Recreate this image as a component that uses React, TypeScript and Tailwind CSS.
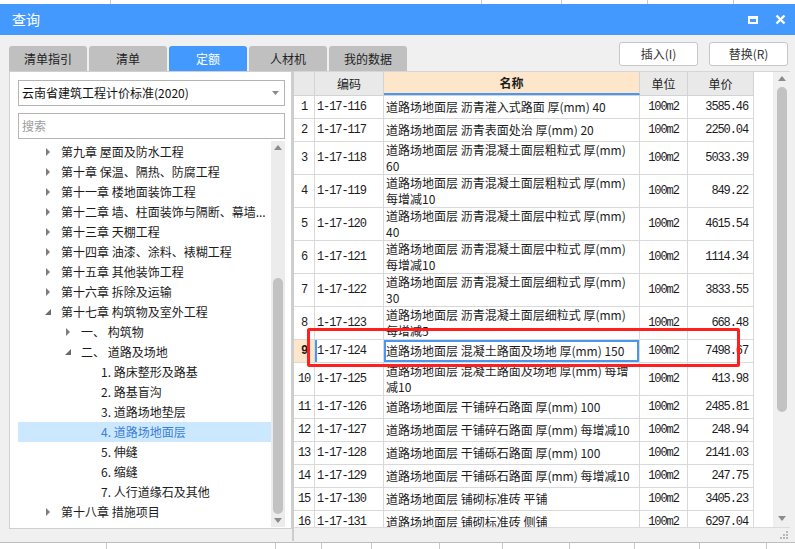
import React from "react";

type Row = { no: number; code: string; name: string[]; unit: string; price: string };

const rows: Row[] = [
  { no: 1, code: "1-17-116", name: ["道路场地面层 沥青灌入式路面 厚(mm) 40"], unit: "100m2", price: "3585.46" },
  { no: 2, code: "1-17-117", name: ["道路场地面层 沥青表面处治 厚(mm) 20"], unit: "100m2", price: "2250.04" },
  { no: 3, code: "1-17-118", name: ["道路场地面层 沥青混凝土面层粗粒式 厚(mm)", "60"], unit: "100m2", price: "5033.39" },
  { no: 4, code: "1-17-119", name: ["道路场地面层 沥青混凝土面层粗粒式 厚(mm)", "每增减10"], unit: "100m2", price: "849.22" },
  { no: 5, code: "1-17-120", name: ["道路场地面层 沥青混凝土面层中粒式 厚(mm)", "40"], unit: "100m2", price: "4615.54" },
  { no: 6, code: "1-17-121", name: ["道路场地面层 沥青混凝土面层中粒式 厚(mm)", "每增减10"], unit: "100m2", price: "1114.34" },
  { no: 7, code: "1-17-122", name: ["道路场地面层 沥青混凝土面层细粒式 厚(mm)", "30"], unit: "100m2", price: "3833.55" },
  { no: 8, code: "1-17-123", name: ["道路场地面层 沥青混凝土面层细粒式 厚(mm)", "每增减5"], unit: "100m2", price: "668.48" },
  { no: 9, code: "1-17-124", name: ["道路场地面层 混凝土路面及场地 厚(mm) 150"], unit: "100m2", price: "7498.67" },
  { no: 10, code: "1-17-125", name: ["道路场地面层 混凝土路面及场地 厚(mm) 每增", "减10"], unit: "100m2", price: "413.98" },
  { no: 11, code: "1-17-126", name: ["道路场地面层 干铺碎石路面 厚(mm) 100"], unit: "100m2", price: "2485.81" },
  { no: 12, code: "1-17-127", name: ["道路场地面层 干铺碎石路面 厚(mm) 每增减10"], unit: "100m2", price: "248.94" },
  { no: 13, code: "1-17-128", name: ["道路场地面层 干铺砾石路面 厚(mm) 100"], unit: "100m2", price: "2141.03" },
  { no: 14, code: "1-17-129", name: ["道路场地面层 干铺砾石路面 厚(mm) 每增减10"], unit: "100m2", price: "247.75" },
  { no: 15, code: "1-17-130", name: ["道路场地面层 铺砌标准砖 平铺"], unit: "100m2", price: "3405.23" },
  { no: 16, code: "1-17-131", name: ["道路场地面层 铺砌标准砖 侧铺"], unit: "100m2", price: "6297.04" },
];

type Node = { level: 0 | 1 | 2; label: string; open?: boolean; selected?: boolean };

const tree: Node[] = [
  { level: 0, label: "第九章 屋面及防水工程" },
  { level: 0, label: "第十章 保温、隔热、防腐工程" },
  { level: 0, label: "第十一章 楼地面装饰工程" },
  { level: 0, label: "第十二章 墙、柱面装饰与隔断、幕墙..." },
  { level: 0, label: "第十三章 天棚工程" },
  { level: 0, label: "第十四章 油漆、涂料、裱糊工程" },
  { level: 0, label: "第十五章 其他装饰工程" },
  { level: 0, label: "第十六章 拆除及运输" },
  { level: 0, label: "第十七章 构筑物及室外工程", open: true },
  { level: 1, label: "一、 构筑物" },
  { level: 1, label: "二、 道路及场地", open: true },
  { level: 2, label: "1. 路床整形及路基" },
  { level: 2, label: "2. 路基盲沟" },
  { level: 2, label: "3. 道路场地垫层" },
  { level: 2, label: "4. 道路场地面层", selected: true },
  { level: 2, label: "5. 伸缝" },
  { level: 2, label: "6. 缩缝" },
  { level: 2, label: "7. 人行道缘石及其他" },
  { level: 0, label: "第十八章 措施项目" },
];

const indent = { 0: "pl-[27px]", 1: "pl-[47px]", 2: "pl-[83px]" };

const Arrow: React.FC<{ open?: boolean }> = ({ open }) =>
  open ? (
    <svg width="16" height="8" viewBox="0 0 16 8">
      <polygon points="6,1 6,7 0,7" fill="#6b6b6b" />
    </svg>
  ) : (
    <svg width="16" height="8" viewBox="0 0 16 8">
      <polygon points="1,0 5,4 1,8" fill="#7d7d7d" />
    </svg>
  );

const tabs = ["清单指引", "清单", "定额", "人材机", "我的数据"];

const mono = "font-['Liberation_Mono','Noto_Sans_CJK_SC',monospace] text-[12px] tracking-[-1.1px]";

const App: React.FC = () => {
  return (
    <div className="w-[795px] h-[549px] overflow-hidden bg-white flex flex-col relative font-['Noto_Sans_CJK_SC','Noto_Sans',sans-serif] text-[#1c1c1c]">
      {/* sheet behind the dialog, top strip */}
      <div className="h-[4px] flex bg-white">
        <div className="w-[111px] border-r border-[#c8c8c8]" />
        <div className="w-[371px] border-r border-[#c8c8c8]" />
        <div className="w-[80px] border-r border-[#c8c8c8]" />
        <div className="w-[86px] border-r border-[#c8c8c8]" />
        <div className="w-[86px] border-r border-[#c8c8c8]" />
      </div>

      {/* dialog */}
      <div className="h-[538px] flex flex-col">
        <div className="h-[31px] bg-[#4499ff] flex items-center pl-[12px] pr-[6px] text-white">
          <span className="text-[14px]">查询</span>
          <div className="ml-auto flex items-center gap-[17px] pr-[3px]">
            <div className="w-[10px] h-[8px] border-2 border-t-[3px] border-white" />
            <svg width="11" height="11" viewBox="0 0 11 11">
              <path d="M1.5 1.5 L9.5 9.5 M9.5 1.5 L1.5 9.5" stroke="white" strokeWidth="2.4" />
            </svg>
          </div>
        </div>

        <div className="flex-1 bg-[#f0f0f0] flex flex-col pl-[9px] pr-[5px]">
          <div className="h-[36px] flex items-end">
            <div className="flex gap-[2px]">
              {tabs.map((t) => (
                <div
                  key={t}
                  className={`w-[78px] h-[25px] rounded-t-[3px] flex items-center justify-center text-[12px] ${
                    t === "定额" ? "bg-[#4499ff] text-white" : "bg-[#c0c0c0] text-[#222]"
                  }`}
                >
                  {t}
                </div>
              ))}
            </div>
            <div className="ml-auto self-start mt-[7px] flex gap-[11px] pr-[2px]">
              <div className="w-[79px] h-[24px] bg-white border border-[#c6c6c6] rounded-[3px] flex items-center justify-center text-[12px] text-[#333]">
                插入(I)
              </div>
              <div className="w-[79px] h-[24px] bg-white border border-[#c6c6c6] rounded-[3px] flex items-center justify-center text-[12px] text-[#333]">
                替换(R)
              </div>
            </div>
          </div>

          <div className="flex h-[470px]">
            {/* left panel */}
            <div className="w-[283px] h-[458px] bg-white border border-[#cfcfcf] flex flex-col pl-[8px] pr-[6px] pt-[8px]">
              <div className="h-[26px] border border-[#b4b4b4] flex items-center pl-[3px] pr-[5px] text-[12px] text-[#111]">
                云南省建筑工程计价标准(2020)
                <svg className="ml-auto" width="7" height="4" viewBox="0 0 7 4">
                  <polygon points="0,0 7,0 3.5,4" fill="#8a8a8a" />
                </svg>
              </div>
              <div className="h-[26px] mt-[7px] border border-[#b4b4b4] flex items-center pl-[3px] text-[12px] text-[#9c9c9c]">
                搜索
              </div>
              <div className="flex flex-1 mt-[2px] mb-[1px]">
                <div className="flex-1 pt-[1px]">
                  {tree.map((n) => (
                    <div
                      key={n.label}
                      className={`h-[20px] flex items-center text-[12px] whitespace-nowrap ${indent[n.level]} ${
                        n.selected ? "bg-[#cce8ff] text-[#3d7fd6]" : ""
                      }`}
                    >
                      {n.level < 2 && <Arrow open={n.open} />}
                      <span>{n.label}</span>
                    </div>
                  ))}
                </div>
                <div className="w-[14px] bg-[#ececec] flex flex-col items-center py-[3px]">
                  <svg width="8" height="5" viewBox="0 0 8 5" className="mt-[1px]">
                    <polygon points="0,5 8,5 4,0" fill="#8c8c8c" />
                  </svg>
                  <div className="flex-1 w-full flex flex-col">
                    <div className="h-[128px]" />
                    <div className="h-[236px] mx-[2px] rounded-full bg-[#c2c2c2]" />
                  </div>
                  <svg width="8" height="5" viewBox="0 0 8 5" className="mb-[1px]">
                    <polygon points="0,0 8,0 4,5" fill="#8c8c8c" />
                  </svg>
                </div>
              </div>
            </div>

            {/* table */}
            <div className="w-[498px] h-[470px] bg-white border-l-2 border-[#cdcdcd] flex flex-col">
              <div className="flex h-[456px] border-t border-[#d6d6d6]">
                <div className="w-[460px] flex flex-col overflow-hidden">
                  <div className="flex h-[24px] shrink-0 text-[12px] border-b border-[#d3d3d3]">
                    <div className="w-[21px] bg-[#e9e9e9] border-r border-[#d3d3d3]" />
                    <div className="w-[69px] bg-[#e9e9e9] border-r border-[#d3d3d3] flex items-center justify-center">编码</div>
                    <div className="w-[256px] bg-[#fde6c9] border-r border-[#d3d3d3] border-b-2 border-b-[#4a96f0] flex items-center justify-center font-bold">名称</div>
                    <div className="w-[48px] bg-[#e9e9e9] border-r border-[#d3d3d3] flex items-center justify-center">单位</div>
                    <div className="w-[66px] bg-[#e9e9e9] border-r border-[#d3d3d3] flex items-center justify-center">单价</div>
                  </div>
                  {rows.map((r) => {
                    const sel = r.no === 9;
                    return (
                      <div
                        key={r.no}
                        className={`flex shrink-0 border-b border-[#d9d9d9] ${r.name.length > 1 ? "h-[33px]" : "h-[23px]"}`}
                      >
                        <div
                          className={`w-[21px] border-r border-[#d9d9d9] flex items-center justify-center ${mono} ${
                            sel ? "bg-[#fde6c9] font-bold" : ""
                          }`}
                        >
                          {r.no}
                        </div>
                        <div
                          className={`w-[69px] border-r border-[#d9d9d9] flex items-center pl-[2px] ${mono} ${
                            sel ? "shadow-[inset_2px_0_0_#4a96f0]" : ""
                          }`}
                        >
                          {r.code}
                        </div>
                        <div
                          className={`w-[256px] border-r border-[#d9d9d9] flex flex-col justify-center pl-[2px] text-[12px] leading-[16px] whitespace-nowrap overflow-hidden ${
                            sel ? "shadow-[inset_0_0_0_2px_#4a96f0]" : ""
                          }`}
                        >
                          {r.name.map((l) => (
                            <div key={l}>{l}</div>
                          ))}
                        </div>
                        <div className={`w-[48px] border-r border-[#d9d9d9] flex items-center justify-center ${mono}`}>
                          {r.unit}
                        </div>
                        <div className={`w-[66px] border-r border-[#d9d9d9] flex items-center justify-end pr-[5px] ${mono}`}>
                          {r.price}
                        </div>
                      </div>
                    );
                  })}
                </div>
                <div className="flex-1" />
                <div className="w-[17px] bg-[#f0f0f0] flex flex-col items-center py-[4px]">
                  <svg width="8" height="5" viewBox="0 0 8 5">
                    <polygon points="0,5 8,5 4,0" fill="#8c8c8c" />
                  </svg>
                  <div className="w-[10px] h-[325px] mt-[6px] rounded-full bg-[#c2c2c2]" />
                  <div className="flex-1" />
                  <svg width="8" height="5" viewBox="0 0 8 5" className="mb-[2px]">
                    <polygon points="0,0 8,0 4,5" fill="#8c8c8c" />
                  </svg>
                </div>
              </div>
              <div className="h-[14px] bg-[#f0f0f0] border-t border-[#dcdcdc] flex justify-end items-end pr-[2px] pb-[2px]">
                <svg width="8" height="8" viewBox="0 0 8 8">
                  <rect x="6" y="0" width="2" height="2" fill="#b8b8b8" />
                  <rect x="3" y="3" width="2" height="2" fill="#b8b8b8" />
                  <rect x="6" y="3" width="2" height="2" fill="#b8b8b8" />
                  <rect x="0" y="6" width="2" height="2" fill="#b8b8b8" />
                  <rect x="3" y="6" width="2" height="2" fill="#b8b8b8" />
                  <rect x="6" y="6" width="2" height="2" fill="#b8b8b8" />
                </svg>
              </div>
            </div>
          </div>
        </div>
      </div>

      {/* sheet behind the dialog, bottom strip */}
      <div className="flex-1 flex border-t border-[#bdbdbd] bg-white">
        <div className="w-[107px] border-r border-[#c8c8c8]" />
        <div className="w-[169px] border-r border-[#c8c8c8]" />
        <div className="w-[46px] border-r border-[#c8c8c8]" />
        <div className="w-[50px] border-r border-[#c8c8c8]" />
        <div className="w-[68px] border-r border-[#c8c8c8]" />
        <div className="w-[63px] border-r border-[#c8c8c8]" />
        <div className="w-[67px] border-r border-[#c8c8c8]" />
        <div className="w-[65px] border-r border-[#c8c8c8]" />
        <div className="w-[65px] border-r border-[#c8c8c8]" />
        <div className="w-[67px] border-r border-[#c8c8c8]" />
      </div>

      {/* red annotation box */}
      <div className="absolute left-[307px] top-[328px] w-[433px] h-[39px] border-[3px] border-[#ff1f1f] rounded-[2px]" />
    </div>
  );
};

export default App;
